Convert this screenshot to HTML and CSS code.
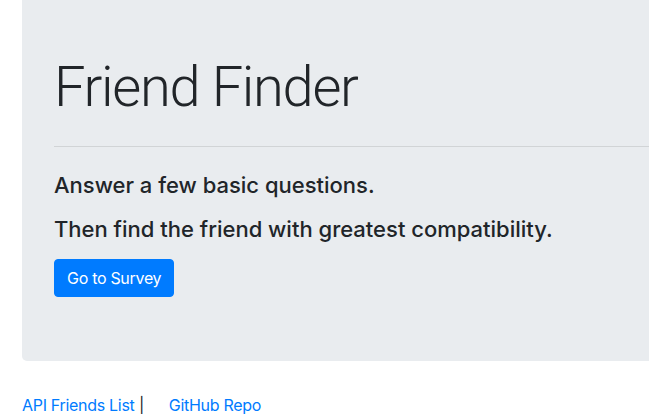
FILE: index.html
```html
<!DOCTYPE html>
<html lang="en">
<head>
<meta charset="utf-8">
<title>Friend Finder</title>
<link rel="stylesheet" href="styles.css">
</head>
<body>
<div class="page">
  <div class="jumbotron">
    <h1 class="title">Friend Finder</h1>
    <hr class="divider">
    <p class="lead lead-first">Answer a few basic questions.</p>
    <p class="lead lead-second">Then find the friend with greatest compatibility.</p>
    <a class="btn" href="#">Go to Survey</a>
  </div>
  <footer class="footer">
    <a class="link" href="#">API Friends List</a> <span class="sep">|</span>
    <a class="link link-gap" href="#">GitHub Repo</a>
  </footer>
</div>
</body>
</html>
```

FILE: styles.css
```css
html, body {
  margin: 0;
  padding: 0;
  background: #fff;
}
body {
  font-family: Inter, "Noto Sans", "Liberation Sans", sans-serif;
  color: #212529;
  font-size: 16px;
  line-height: 1.5;
  overflow: hidden;
}
.page {
  padding-left: 22px;
  height: 414px;
  overflow: hidden;
}
.jumbotron {
  background: #e9ecef;
  margin-right: -60px;
  padding: 54px 32px 64px 32px;
  border-radius: 0 0 5px 5px;
}
.title {
  margin: 0;
  font-family: Roboto, Inter, sans-serif;
  font-size: 56px;
  font-weight: 300;
  line-height: 67px;
  letter-spacing: -1.3px;
}
.divider {
  margin: 25px 0 0 0;
  border: 0;
  border-top: 1px solid rgba(0, 0, 0, 0.1);
}
.lead {
  margin: 0;
  font-size: 22px;
  font-weight: 500;
  line-height: 30px;
}
.lead-first {
  margin-top: 23px;
}
.lead-second {
  margin-top: 14px;
}
.btn {
  display: inline-block;
  margin-top: 15px;
  padding: 6px 12px;
  font-size: 16px;
  line-height: 24px;
  letter-spacing: -0.3px;
  color: #fff;
  background: #007bff;
  border: 1px solid #007bff;
  border-radius: 4px;
  text-decoration: none;
}
.footer {
  margin-top: 32px;
  font-size: 16px;
  line-height: 24px;
}
.link {
  color: #007bff;
  text-decoration: none;
  letter-spacing: -0.3px;
}
.sep {
  color: #212529;
}
.link-gap {
  margin-left: 20px;
}
```
